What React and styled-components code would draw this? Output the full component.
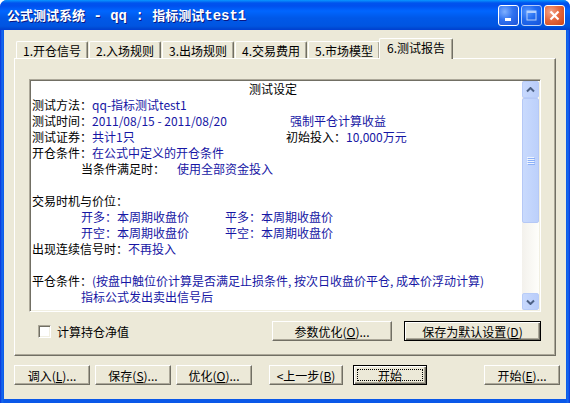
import React from 'react';
import styled, { createGlobalStyle, css } from 'styled-components';

const face = '#ece9d8';
const shadow = '#aca899';
const dark = '#716f64';
const blueText = '#1616a4';

const GlobalStyle = createGlobalStyle`
  html, body {
    margin: 0;
    padding: 0;
    background: #ffffff;
  }
  body {
    font-family: "Noto Sans CJK SC", "Liberation Sans", sans-serif;
    font-size: 12px;
  }
`;

const Window = styled.div`
  width: 570px;
  height: 403px;
  box-sizing: border-box;
  display: flex;
  flex-direction: column;
  background: linear-gradient(to right, #0831d9 0, #166aee 2px, #0a58e8 4px, #0a58e8 566px, #166aee 568px, #0831d9 100%);
  border-radius: 7px 7px 0 0;
  overflow: hidden;
`;

const TitleBar = styled.div`
  height: 30px;
  flex: none;
  display: flex;
  align-items: center;
  padding: 0 5px 0 7px;
  background: linear-gradient(
    to bottom,
    #0997ff 0,
    #0053ee 3px,
    #0050ee 6px,
    #0066ff 11px,
    #0058e8 18px,
    #0055e1 26px,
    #0045cf 29px,
    #003dd7 100%
  );
`;

const Title = styled.div`
  flex: 1;
  color: #ffffff;
  font-weight: bold;
  font-size: 13px;
  white-space: pre;
  text-shadow: 1px 1px 0 #0a1883;
  margin-top: -2px;
`;

const TitleLatin = styled.span`
  font-family: "Liberation Mono", "DejaVu Sans Mono", monospace;
  font-size: 14px;
`;

const CaptionButton = styled.div`
  width: 21px;
  height: 21px;
  box-sizing: border-box;
  margin-left: 2px;
  border: 1px solid #ffffff;
  border-radius: 3px;
  display: flex;
  align-items: center;
  justify-content: center;
  opacity: ${({ disabled }) => (disabled ? 0.7 : 1)};
  background: ${({ close }) =>
    close
      ? 'radial-gradient(circle at 30% 30%, #f3a489 0, #e5693f 45%, #cc4418 100%)'
      : 'radial-gradient(circle at 30% 30%, #7fb0ff 0, #2f72f0 45%, #1c53d8 100%)'};
`;

const Client = styled.div`
  flex: 1;
  margin: 0 4px 4px;
  background: ${face};
  display: flex;
  flex-direction: column;
  padding: 8px 10px 0;
`;

const TabStrip = styled.div`
  display: flex;
  align-items: flex-end;
  height: 20px;
  padding-left: 2px;
  position: relative;
  z-index: 1;
`;

const Tab = styled.div`
  height: 17px;
  line-height: 17px;
  padding: 0 6px;
  box-sizing: border-box;
  white-space: nowrap;
  border-top: 1px solid #ffffff;
  border-left: 1px solid #ffffff;
  border-right: 1px solid ${dark};
  box-shadow: inset -1px 0 0 ${shadow};
  border-radius: 2px 2px 0 0;
  margin-right: 1px;
  color: #000;
  ${({ active }) =>
    active &&
    css`
      height: 21px;
      line-height: 18px;
      margin: 0 -1px -1px -2px;
      padding: 0 7px;
      background: ${face};
    `}
`;

const Panel = styled.div`
  height: 298px;
  box-sizing: border-box;
  border-top: 1px solid #ffffff;
  border-left: 1px solid #ffffff;
  border-right: 1px solid ${dark};
  border-bottom: 1px solid ${dark};
  box-shadow: inset -1px -1px 0 ${shadow};
  padding: 20px 14px 0 14px;
  display: flex;
  flex-direction: column;
`;

const ReportBox = styled.div`
  height: 233px;
  box-sizing: border-box;
  background: #ffffff;
  border: 1px solid;
  border-color: ${shadow} #ffffff #ffffff ${shadow};
  box-shadow: inset 1px 1px 0 ${dark}, inset -1px -1px 0 #f1efe2;
  padding: 1px;
  display: flex;
`;

const Report = styled.div`
  flex: 1;
  padding-left: 1px;
  overflow: hidden;
`;

const Line = styled.div`
  display: flex;
  height: 16px;
  line-height: 16px;
  white-space: nowrap;
  padding-left: ${({ indent }) => (indent ? '49px' : '0')};
  ${({ center }) =>
    center &&
    css`
      justify-content: center;
      padding-right: 8px;
    `}
`;

const Cell = styled.span`
  flex: none;
  width: ${({ w }) => (w ? `${w}px` : 'auto')};
`;

const Label = styled.span`
  color: #000000;
`;

const Value = styled.span`
  color: ${blueText};
  margin-left: ${({ gap }) => gap || 0}px;
`;

const ScrollBar = styled.div`
  width: 17px;
  flex: none;
  display: flex;
  flex-direction: column;
  background: linear-gradient(to right, #f3f1ec, #fefefb);
`;

const ScrollButton = styled.div`
  height: 17px;
  box-sizing: border-box;
  border: 1px solid #b8ccf8;
  border-radius: 2px;
  background: linear-gradient(to right, #c8d9fd, #b9cdfa);
  display: flex;
  align-items: center;
  justify-content: center;
`;

const Thumb = styled.div`
  height: 125px;
  box-sizing: border-box;
  border: 1px solid #b5c8f6;
  border-radius: 2px;
  background: linear-gradient(to right, #c9dafd, #bcd0fb);
  display: flex;
  align-items: center;
  justify-content: center;
`;

const Track = styled.div`
  flex: 1;
`;

const OptionsRow = styled.div`
  display: flex;
  align-items: center;
  margin-top: 9px;
  height: 20px;
`;

const CheckLabel = styled.label`
  display: flex;
  align-items: center;
  margin-left: 9px;
  flex: 1;
  color: #000;
`;

const CheckBox = styled.span`
  width: 13px;
  height: 13px;
  box-sizing: border-box;
  background: #ffffff;
  border: 1px solid;
  border-color: ${shadow} #ffffff #ffffff ${shadow};
  box-shadow: inset 1px 1px 0 ${dark}, inset -1px -1px 0 #f1efe2;
  margin-right: 6px;
`;

const Button = styled.div`
  width: ${({ w }) => w}px;
  height: ${({ h }) => h || 20}px;
  margin-left: ${({ gap }) => gap || 0}px;
  box-sizing: border-box;
  background: ${face};
  border: 1px solid;
  border-color: #ffffff ${dark} ${dark} #ffffff;
  box-shadow: inset -1px -1px 0 ${shadow};
  display: flex;
  align-items: center;
  justify-content: center;
  white-space: nowrap;
  color: #000;
  flex: none;
  ${({ primary }) =>
    primary &&
    css`
      border: 1px solid #000000;
      box-shadow: inset 1px 1px 0 #ffffff, inset -1px -1px 0 ${dark}, inset -2px -2px 0 ${shadow};
    `}
  ${({ focused }) =>
    focused &&
    css`
      padding: 3px;
      align-items: stretch;
    `}
`;

const FocusRing = styled.span`
  flex: 1;
  border: 1px dotted #000;
  display: flex;
  align-items: center;
  justify-content: center;
`;

const ButtonRow = styled.div`
  display: flex;
  align-items: center;
  margin-top: 9px;
`;

const Grip = () => (
  <svg width="8" height="8" viewBox="0 0 8 8">
    {[0, 2, 4, 6].map((y) => (
      <g key={y}>
        <rect x="0" y={y} width="7" height="1" fill="#eef4fe" />
        <rect x="1" y={y + 1} width="7" height="1" fill="#8cb0f8" />
      </g>
    ))}
  </svg>
);

const Chevron = ({ down }) => (
  <svg width="9" height="6" viewBox="0 0 9 6">
    <path
      d={down ? 'M1 1.5 L4.5 5 L8 1.5' : 'M1 4.5 L4.5 1 L8 4.5'}
      fill="none"
      stroke="#4d6185"
      strokeWidth="2"
    />
  </svg>
);

const App = () => (
  <>
    <GlobalStyle />
    <Window>
      <TitleBar>
        <Title>
          公式测试系统<TitleLatin> - qq : </TitleLatin>指标测试<TitleLatin>test1</TitleLatin>
        </Title>
        <CaptionButton>
          <svg width="13" height="13" viewBox="0 0 13 13">
            <rect x="3" y="9" width="6" height="3" fill="#fff" />
          </svg>
        </CaptionButton>
        <CaptionButton disabled>
          <svg width="13" height="13" viewBox="0 0 13 13">
            <rect x="2" y="2" width="9" height="9" fill="none" stroke="#fff" strokeWidth="1" />
            <rect x="2" y="2" width="9" height="2" fill="#fff" />
          </svg>
        </CaptionButton>
        <CaptionButton close>
          <svg width="13" height="13" viewBox="0 0 13 13">
            <path d="M2.5 2.5 L10.5 10.5 M10.5 2.5 L2.5 10.5" stroke="#fff" strokeWidth="2.2" />
          </svg>
        </CaptionButton>
      </TitleBar>
      <Client>
        <TabStrip>
          <Tab>1.开仓信号</Tab>
          <Tab>2.入场规则</Tab>
          <Tab>3.出场规则</Tab>
          <Tab>4.交易费用</Tab>
          <Tab>5.市场模型</Tab>
          <Tab active>6.测试报告</Tab>
        </TabStrip>
        <Panel>
          <ReportBox>
            <Report>
              <Line center>测试设定</Line>
              <Line>
                <Label>测试方法：</Label>
                <Value>qq-指标测试test1</Value>
              </Line>
              <Line>
                <Cell w={258}>
                  <Label>测试时间：</Label>
                  <Value>2011/08/15 - 2011/08/20</Value>
                </Cell>
                <Value>强制平仓计算收益</Value>
              </Line>
              <Line>
                <Cell w={254}>
                  <Label>测试证券：</Label>
                  <Value>共计1只</Value>
                </Cell>
                <Label>初始投入：</Label>
                <Value>10,000万元</Value>
              </Line>
              <Line>
                <Label>开仓条件：</Label>
                <Value>在公式中定义的开仓条件</Value>
              </Line>
              <Line indent>
                <Label>当条件满足时：</Label>
                <Value gap={12}>使用全部资金投入</Value>
              </Line>
              <Line />
              <Line>
                <Label>交易时机与价位：</Label>
              </Line>
              <Line indent>
                <Cell w={144}>
                  <Value>开多：本周期收盘价</Value>
                </Cell>
                <Value>平多：本周期收盘价</Value>
              </Line>
              <Line indent>
                <Cell w={144}>
                  <Value>开空：本周期收盘价</Value>
                </Cell>
                <Value>平空：本周期收盘价</Value>
              </Line>
              <Line>
                <Label>出现连续信号时：</Label>
                <Value>不再投入</Value>
              </Line>
              <Line />
              <Line>
                <Label>平仓条件：</Label>
                <Value>(按盘中触位价计算是否满足止损条件, 按次日收盘价平仓, 成本价浮动计算)</Value>
              </Line>
              <Line indent>
                <Value>指标公式发出卖出信号后</Value>
              </Line>
            </Report>
            <ScrollBar>
              <ScrollButton>
                <Chevron />
              </ScrollButton>
              <Thumb>
                <Grip />
              </Thumb>
              <Track />
              <ScrollButton>
                <Chevron down />
              </ScrollButton>
            </ScrollBar>
          </ReportBox>
          <OptionsRow>
            <CheckLabel>
              <CheckBox />
              计算持仓净值
            </CheckLabel>
            <Button w={120}>
              参数优化(<u>O</u>)...
            </Button>
            <Button w={137} gap={12} primary>
              保存为默认设置(<u>D</u>)
            </Button>
          </OptionsRow>
        </Panel>
        <ButtonRow>
          <Button w={76}>
            调入(<u>L</u>)...
          </Button>
          <Button w={76} gap={5}>
            保存(<u>S</u>)...
          </Button>
          <Button w={76} gap={5}>
            优化(<u>O</u>)...
          </Button>
          <Button w={74} gap={17}>
            &lt;上一步(<u>B</u>)
          </Button>
          <Button w={74} gap={10} primary focused>
            <FocusRing>开始</FocusRing>
          </Button>
          <Button w={76} gap={57}>
            开始(<u>E</u>)...
          </Button>
        </ButtonRow>
      </Client>
    </Window>
  </>
);

export default App;
